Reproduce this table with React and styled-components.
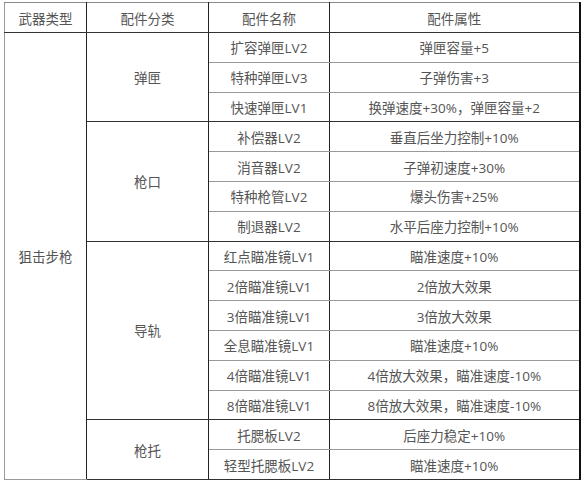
import React from "react";
import styled, { createGlobalStyle } from "styled-components";

const Global = createGlobalStyle`
  html, body { margin: 0; padding: 0; background: #fff; }
  body { font-family: "Open Sans", "Noto Sans CJK SC", sans-serif; }
`;

const Page = styled.div`
  width: 584px;
  height: 482px;
  padding: 2px 0 0 4px;
  box-sizing: border-box;
  background: #fff;
`;

const Table = styled.table`
  border-collapse: collapse;
  table-layout: fixed;
  width: 575px;
  border-left: 1px solid #9a9a9a;
  border-top: 1px solid #8a8a8a;
  border-right: 2px solid #111;
  border-bottom: 1px solid #9a9a9a;
  color: #555;
  font-size: 13.5px;
`;

const Col = styled.col`
  width: ${(p) => p.$w}px;
`;

const Th = styled.th`
  font-weight: normal;
  height: 29px;
  padding: 0;
  text-align: center;
  border-right: 1px solid #222;
  border-bottom: 1px solid #333;
  background: #fff;
`;

const Td = styled.td`
  height: 28.8px;
  padding: 0;
  text-align: center;
  vertical-align: middle;
  border-right: 1px solid #222;
  border-bottom: 1px solid ${(p) => (p.$light ? "#9a9a9a" : "#333")};
  white-space: nowrap;
`;

const groups = [
  {
    name: "弹匣",
    items: [
      ["扩容弹匣LV2", "弹匣容量+5"],
      ["特种弹匣LV3", "子弹伤害+3"],
      ["快速弹匣LV1", "换弹速度+30%，弹匣容量+2"],
    ],
  },
  {
    name: "枪口",
    items: [
      ["补偿器LV2", "垂直后坐力控制+10%"],
      ["消音器LV2", "子弹初速度+30%"],
      ["特种枪管LV2", "爆头伤害+25%"],
      ["制退器LV2", "水平后座力控制+10%"],
    ],
  },
  {
    name: "导轨",
    items: [
      ["红点瞄准镜LV1", "瞄准速度+10%"],
      ["2倍瞄准镜LV1", "2倍放大效果"],
      ["3倍瞄准镜LV1", "3倍放大效果"],
      ["全息瞄准镜LV1", "瞄准速度+10%"],
      ["4倍瞄准镜LV1", "4倍放大效果，瞄准速度-10%"],
      ["8倍瞄准镜LV1", "8倍放大效果，瞄准速度-10%"],
    ],
  },
  {
    name: "枪托",
    items: [
      ["托腮板LV2", "后座力稳定+10%"],
      ["轻型托腮板LV2", "瞄准速度+10%"],
    ],
  },
];

const total = groups.reduce((s, g) => s + g.items.length, 0);

export default function App() {
  const rows = [];
  groups.forEach((g, gi) => {
    g.items.forEach(([name, attr], ii) => {
      const last = ii === g.items.length - 1;
      rows.push(
        <tr key={name}>
          {gi === 0 && ii === 0 && (
            <Td rowSpan={total} $light>
              狙击步枪
            </Td>
          )}
          {ii === 0 && <Td rowSpan={g.items.length}>{g.name}</Td>}
          <Td $light={!last}>{name}</Td>
          <Td $light={!last}>{attr}</Td>
        </tr>
      );
    });
  });
  return (
    <Page>
      <Global />
      <Table>
        <colgroup>
          <Col $w={82} />
          <Col $w={122} />
          <Col $w={121} />
          <Col $w={250} />
        </colgroup>
        <thead>
          <tr>
            <Th>武器类型</Th>
            <Th>配件分类</Th>
            <Th>配件名称</Th>
            <Th>配件属性</Th>
          </tr>
        </thead>
        <tbody>{rows}</tbody>
      </Table>
    </Page>
  );
}
